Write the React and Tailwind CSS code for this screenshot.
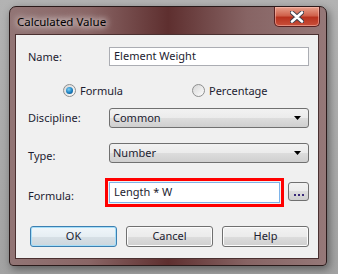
import { useState } from 'react';

const font = { fontFamily: '"Noto Sans", "Liberation Sans", sans-serif' };

function CloseButton() {
  return (
    <div className="h-[20px] w-[46px] rounded-b-[5px] border border-t-0 border-[#5a2020] bg-[linear-gradient(#e8a08c,#d0624c_45%,#b8321e_55%,#c9503a)] flex items-center justify-center shadow-[inset_0_0_0_1px_rgba(255,200,190,0.5)]">
      <svg width="14" height="12" viewBox="0 0 14 12">
        <path d="M2 1.5 L7 6 M12 1.5 L7 6 M2 10.5 L7 6 M12 10.5 L7 6" stroke="#3d3d4a" strokeWidth="4.4" strokeLinecap="round" />
        <path d="M2 1.5 L7 6 M12 1.5 L7 6 M2 10.5 L7 6 M12 10.5 L7 6" stroke="#ffffff" strokeWidth="2.6" strokeLinecap="round" />
      </svg>
    </div>
  );
}

function Radio({ checked, label, onClick }) {
  return (
    <button type="button" onClick={onClick} className="flex items-center gap-[4px] text-[11px] text-[#1c1c30] leading-none">
      <span className="w-[13px] h-[13px] rounded-full border border-[#8e8f8f] bg-[linear-gradient(135deg,#d6d6d6,#fdfdfd)] flex items-center justify-center">
        {checked && (
          <span className="w-[7px] h-[7px] rounded-full bg-[radial-gradient(circle_at_40%_35%,#7fd0f4,#1a7fc0_55%,#0a3d6e)]" />
        )}
      </span>
      <span>{label}</span>
    </button>
  );
}

function Select({ value }) {
  return (
    <div className="h-[20px] w-[200px] rounded-[3px] border border-[#707070] bg-[linear-gradient(#f2f2f2,#ebebeb_50%,#dddddd_50%,#cfcfcf)] flex items-center justify-between pl-[3px] pr-[7px] text-[11px] text-[#1c1c30]">
      <span>{value}</span>
      <svg width="7" height="4" viewBox="0 0 7 4">
        <path d="M0 0 H7 L3.5 4 Z" fill="#000" />
      </svg>
    </div>
  );
}

function Btn({ children, focused }) {
  const cls = focused
    ? 'border-[#3c7fb1] bg-[linear-gradient(#f0f6fa,#e6eef3_50%,#d7e0e6_50%,#ccd6dd)] shadow-[inset_0_0_0_1px_#a6def8]'
    : 'border-[#707070] bg-[linear-gradient(#f2f2f2,#ebebeb_50%,#dddddd_50%,#cfcfcf)] shadow-[inset_0_0_0_1px_#fcfcfc]';
  return (
    <button type="button" className={`h-[21px] w-[87px] rounded-[3px] border text-[11px] text-[#1c1c30] ${cls}`}>
      {children}
    </button>
  );
}

export default function App() {
  const [mode, setMode] = useState('formula');

  return (
    <div className="w-[338px] h-[274px] bg-[linear-gradient(#b3b3b3,#a2a2a2)] pl-[9px] pt-[6px]" style={font}>
      {/* Window frame */}
      <div className="w-[318px] h-[260px] rounded-t-[7px] rounded-b-[4px] border border-[#2a1a1a] bg-[linear-gradient(90deg,#927575,#8a6666_25%,#5e2f2f_50%,#876464_75%,#957878)] shadow-[2px_3px_8px_rgba(0,0,0,0.45)] flex flex-col">
        {/* Title bar */}
        <div className="h-[27px] flex items-start justify-between pl-[7px] pr-[6px]">
          <span className="mt-[9px] text-[11.5px] text-black leading-none [text-shadow:0_0_6px_#fff,0_0_8px_#fff]">Calculated Value</span>
          <CloseButton />
        </div>
        {/* Client area */}
        <div className="ml-[5px] mr-[7px] h-[225px] border border-[#4a3030] bg-[#f0f0f0] text-[11px] text-[#1c1c30] flex flex-col pl-[12px]">
          <div className="mt-[12px] flex items-center">
            <span className="w-[81px] pt-[2px]">Name:</span>
            <div className="h-[19px] w-[200px] border border-[#abadb3] bg-white flex items-center pl-[4px]">
              Element Weight
            </div>
          </div>

          <div className="mt-[18px] flex items-center h-[13px]">
            <div className="w-[35px]" />
            <div className="w-[129px]">
              <Radio checked={mode === 'formula'} label="Formula" onClick={() => setMode('formula')} />
            </div>
            <Radio checked={mode === 'percentage'} label="Percentage" onClick={() => setMode('percentage')} />
          </div>

          <div className="mt-[11px] flex items-center">
            <span className="w-[81px]">Discipline:</span>
            <Select value="Common" />
          </div>

          <div className="mt-[15px] flex items-end">
            <span className="w-[81px] leading-[14px]">Type:</span>
            <Select value="Number" />
          </div>

          <div className="mt-[15px] flex items-end">
            <span className="w-[77px] leading-[14px] mb-[4px]">Formula:</span>
            <div className="h-[29px] w-[179px] border-[3px] border-[#ff0000] p-[1px]">
              <div className="h-full w-full border border-[#7eb4ea] bg-white flex items-center pl-[4px]">
                Length * W
              </div>
            </div>
            <button type="button" className="ml-[4px] mb-[6px] h-[19px] w-[21px] rounded-[3px] border border-[#707070] bg-[linear-gradient(#f2f2f2,#ebebeb_50%,#dddddd_50%,#cfcfcf)] flex items-end justify-center pb-[4px] gap-[2px]">
              <span className="w-[2px] h-[2px] bg-[#3a2a7a]" />
              <span className="w-[2px] h-[2px] bg-[#3a2a7a]" />
              <span className="w-[2px] h-[2px] bg-[#3a2a7a]" />
            </button>
          </div>

          <div className="mt-[19px] flex gap-[9px] pl-[2px]">
            <Btn focused>OK</Btn>
            <Btn>Cancel</Btn>
            <Btn>Help</Btn>
          </div>
        </div>
      </div>
    </div>
  );
}
